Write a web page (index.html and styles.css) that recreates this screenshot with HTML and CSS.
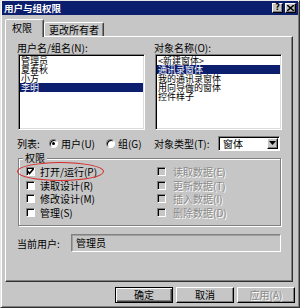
FILE: index.html
```html
<!DOCTYPE html>
<html>
<head>
<meta charset="utf-8">
<link rel="stylesheet" href="styles.css">
</head>
<body>
<div class="window">
  <div class="titlebar">
    <span class="title">用户与组权限</span>
    <div class="tbtns">
      <span class="tbtn">?</span>
      <span class="tbtn tclose"><svg width="7" height="6" viewBox="0 0 7 6"><path d="M0 0L7 6M7 0L0 6" stroke="#000" stroke-width="1.5"/></svg></span>
    </div>
  </div>
  <div class="tabs">
    <div class="tab active">权限</div>
    <div class="tab">更改所有者</div>
  </div>
  <div class="panel">
    <div class="lists">
      <div class="col">
        <div class="lbl">用户名/组名(N):</div>
        <div class="listbox">
          <div class="item">管理员</div>
          <div class="item">夏春秋</div>
          <div class="item">小方</div>
          <div class="item sel">李明</div>
        </div>
      </div>
      <div class="col">
        <div class="lbl">对象名称(O):</div>
        <div class="listbox">
          <div class="item">&lt;新建窗体&gt;</div>
          <div class="item sel">通讯录窗体</div>
          <div class="item">我的通讯录窗体</div>
          <div class="item">用向导做的窗体</div>
          <div class="item">控件样子</div>
        </div>
      </div>
    </div>
    <div class="row2">
      <div class="listtype">
        <span class="lt-lbl">列表:</span>
        <span class="radio on"></span><span class="rtext">用户(U)</span>
        <span class="radio r2"></span><span class="rtext">组(G)</span>
      </div>
      <div class="objtype">
        <span class="ot-lbl">对象类型(T):</span>
        <div class="combo">
          <span class="combo-text">窗体</span>
          <span class="combo-btn"><svg width="7" height="4" viewBox="0 0 7 4"><path d="M0 0H7L3.5 4Z" fill="#000"/></svg></span>
        </div>
      </div>
    </div>
    <div class="group">
      <div class="group-label">权限</div>
      <div class="checks">
        <div class="chk"><span class="box"><svg width="7" height="7" viewBox="0 0 7 7"><path d="M0.5 3L2.5 5.5L6.5 0.8" stroke="#000" stroke-width="1.6" fill="none"/></svg></span><span>打开/运行(P)</span></div>
        <div class="chk dis"><span class="box"></span><span>读取数据(E)</span></div>
        <div class="chk"><span class="box"></span><span>读取设计(R)</span></div>
        <div class="chk dis"><span class="box"></span><span>更新数据(T)</span></div>
        <div class="chk"><span class="box"></span><span>修改设计(M)</span></div>
        <div class="chk dis"><span class="box"></span><span>插入数据(I)</span></div>
        <div class="chk"><span class="box"></span><span>管理(S)</span></div>
        <div class="chk dis"><span class="box"></span><span>删除数据(D)</span></div>
      </div>
      <div class="mark"></div>
    </div>
    <div class="current">
      <span class="cur-lbl">当前用户:</span>
      <div class="cur-box">管理员</div>
    </div>
  </div>
  <div class="footer">
    <div class="btn default">确定</div>
    <div class="btn">取消</div>
    <div class="btn disabled">应用(A)</div>
  </div>
</div>
</body>
</html>
```
FILE: styles.css
```css
* { box-sizing: border-box; }
html, body { margin: 0; padding: 0; }
body {
  width: 300px;
  height: 308px;
  background: #c6c6c6;
  font-family: "Noto Sans CJK SC", "Noto Sans", sans-serif;
  font-size: 10px;
  color: #000;
  overflow: hidden;
}
.window {
  width: 300px;
  height: 308px;
  background: #c6c6c6;
  border: 1px solid;
  border-color: #e6e6e6 #303030 #303030 #e6e6e6;
  box-shadow: inset 1px 1px 0 #fff, inset -1px -1px 0 #808080;
  padding: 0 1px 1px 1px;
}
.titlebar {
  height: 14px;
  background: #0c1e6e;
  display: flex;
  align-items: center;
  justify-content: space-between;
  padding: 0 2px 0 2px;
}
.title {
  color: #fff;
  font-weight: bold;
  font-size: 9.5px;
  line-height: 14px;
}
.tbtns { display: flex; gap: 2px; }
.tbtn {
  width: 11px;
  height: 10px;
  background: #c6c6c6;
  border: 1px solid;
  border-color: #fff #000 #000 #fff;
  box-shadow: inset -1px -1px 0 #808080;
  font-size: 8px;
  font-weight: bold;
  line-height: 8px;
  text-align: center;
  display: flex;
  align-items: center;
  justify-content: center;
  font-family: "DejaVu Sans", sans-serif;
}
.tabs {
  display: flex;
  align-items: flex-end;
  height: 21px;
  margin: 0 0 0 3px;
  position: relative;
  z-index: 2;
}
.tab {
  height: 14px;
  padding: 0 4px;
  border: 1px solid;
  border-bottom: none;
  border-color: #fff #404040 transparent #fff;
  box-shadow: inset -1px 0 0 #808080;
  border-radius: 2px 2px 0 0;
  line-height: 13px;
  background: #c6c6c6;
}
.tab.active {
  height: 18px;
  width: 39px;
  margin-bottom: -1px;
  padding-left: 6px;
  line-height: 15px;
}
.panel {
  margin: 0 5px 0 3px;
  height: 246px;
  border: 1px solid;
  border-color: #fff #303030 #303030 #fff;
  box-shadow: inset -1px -1px 0 #808080;
  padding: 5px 10px 0 12px;
  position: relative;
  z-index: 1;
}
.lists {
  display: grid;
  grid-template-columns: 127px 127px;
  column-gap: 10px;
}
.lbl {
  height: 12px;
  line-height: 12px;
  margin-left: -1px;
}
.listbox {
  height: 76px;
  background: #fff;
  border: 1px solid;
  border-color: #808080 #fff #fff #808080;
  box-shadow: inset 1px 1px 0 #000, inset -1px -1px 0 #dcdcdc;
  padding: 1px;
}
.item {
  height: 9px;
  line-height: 9px;
  font-size: 9px;
  padding-left: 1px;
  white-space: nowrap;
}
.item.sel {
  background: #0c1e6e;
  color: #fff;
}
.row2 {
  margin-top: 6px;
  height: 14px;
  display: grid;
  grid-template-columns: 127px 127px;
  column-gap: 10px;
  align-items: center;
}
.listtype, .objtype {
  display: flex;
  align-items: center;
  height: 14px;
}
.lt-lbl { margin-left: -1px; width: 32px; }
.radio {
  width: 9px;
  height: 9px;
  border-radius: 50%;
  background: #fff;
  border: 1px solid;
  border-color: #808080 #fff #fff #808080;
  box-shadow: inset 1px 1px 0 #000;
  display: flex;
  align-items: center;
  justify-content: center;
}
.radio.on::after {
  content: "";
  width: 3px;
  height: 3px;
  border-radius: 50%;
  background: #000;
}
.rtext { margin-left: 3px; }
.radio.r2 { margin-left: 11px; }
.ot-lbl { width: 64px; margin-left: -1px; }
.combo {
  width: 62px;
  height: 15px;
  background: #fff;
  border: 1px solid;
  border-color: #808080 #fff #fff #808080;
  box-shadow: inset 1px 1px 0 #000;
  display: flex;
  align-items: center;
  justify-content: space-between;
  padding: 1px 1px 1px 4px;
}
.combo-text { line-height: 11px; }
.combo-btn {
  width: 11px;
  height: 11px;
  background: #c6c6c6;
  border: 1px solid;
  border-color: #fff #000 #000 #fff;
  box-shadow: inset -1px -1px 0 #808080;
  display: flex;
  align-items: center;
  justify-content: center;
}
.group {
  margin-top: 8px;
  width: 263px;
  border: 1px solid #808080;
  box-shadow: inset 1px 1px 0 #fff, 1px 1px 0 #fff;
  padding: 0 0 6px 7px;
  position: relative;
}
.group-label {
  margin: -7px 0 0 -3px;
  width: max-content;
  padding: 0 2px;
  background: #c6c6c6;
  line-height: 11px;
  height: 11px;
}
.checks {
  margin-top: 2px;
  display: grid;
  grid-template-columns: 131px auto;
}
.chk {
  height: 13.5px;
  display: flex;
  align-items: center;
  white-space: nowrap;
}
.box {
  width: 9px;
  height: 9px;
  background: #fff;
  border: 1px solid;
  border-color: #808080 #fff #fff #808080;
  box-shadow: inset 1px 1px 0 #000;
  margin-right: 5px;
  display: flex;
  align-items: center;
  justify-content: center;
}
.chk.dis .box { background: #c6c6c6; }
.chk.dis span:last-child {
  color: #8a8a8a;
  text-shadow: 1px 1px 0 #fff;
  margin-left: 2px;
}
.mark {
  position: absolute;
  left: -2px;
  top: 3px;
  width: 87px;
  height: 19px;
  border: 1.5px solid #d42a2a;
  border-radius: 50%;
}
.current {
  margin-top: 8px;
  display: flex;
  align-items: center;
  height: 18px;
}
.cur-lbl { width: 54px; margin-left: -1px; }
.cur-box {
  width: 210px;
  height: 18px;
  border: 1px solid;
  border-color: #808080 #fff #fff #808080;
  box-shadow: inset 1px 1px 0 #a0a0a0;
  padding-left: 4px;
  line-height: 16px;
}
.footer {
  margin-top: 5px;
  display: flex;
  justify-content: flex-end;
  gap: 3px;
  padding-right: 3px;
}
.btn {
  width: 58px;
  height: 16px;
  border: 1px solid;
  border-color: #fff #000 #000 #fff;
  box-shadow: inset -1px -1px 0 #808080;
  text-align: center;
  line-height: 14px;
}
.btn.default {
  border: 1px solid #000;
  box-shadow: inset 1px 1px 0 #fff, inset -1px -1px 0 #404040, inset -2px -2px 0 #808080;
}
.btn.disabled {
  color: #8a8a8a;
  text-shadow: 1px 1px 0 #fff;
}
```
